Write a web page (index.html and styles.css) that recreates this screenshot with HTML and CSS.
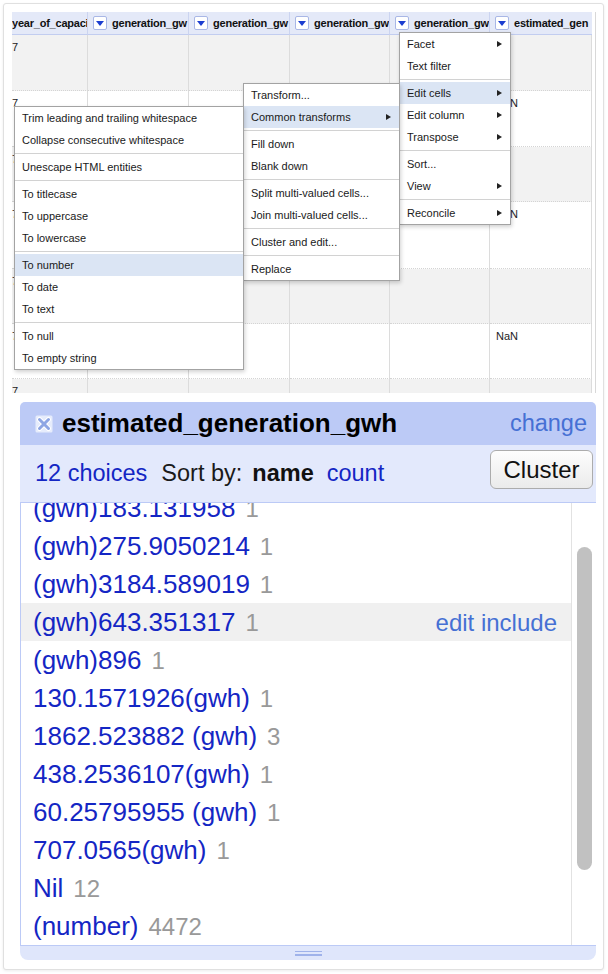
FILE: index.html
```html
<!DOCTYPE html>
<html>
<head>
<meta charset="utf-8">
<link rel="stylesheet" href="styles.css">
</head>
<body>
<div class="card">
  <div class="window">
    <div class="grid">
      <div class="row">
        <div class="hcell first"><span class="htext">year_of_capaci</span></div>
        <div class="hcell"><span class="dd"></span><span class="htext">generation_gw</span></div>
        <div class="hcell"><span class="dd"></span><span class="htext">generation_gw</span></div>
        <div class="hcell"><span class="dd"></span><span class="htext">generation_gw</span></div>
        <div class="hcell"><span class="dd"></span><span class="htext">generation_gw</span></div>
        <div class="hcell last"><span class="dd"></span><span class="htext">estimated_gen</span></div>
      </div>
      <div class="row alt"><div class="cell c1">7</div><div class="cell"></div><div class="cell"></div><div class="cell"></div><div class="cell"></div><div class="cell"></div></div>
      <div class="row"><div class="cell c1">7</div><div class="cell"></div><div class="cell"></div><div class="cell"></div><div class="cell"></div><div class="cell">NaN</div></div>
      <div class="row alt"><div class="cell c1">7</div><div class="cell"></div><div class="cell"></div><div class="cell"></div><div class="cell"></div><div class="cell"></div></div>
      <div class="row"><div class="cell c1">7</div><div class="cell"></div><div class="cell"></div><div class="cell"></div><div class="cell"></div><div class="cell">NaN</div></div>
      <div class="row alt"><div class="cell c1">7</div><div class="cell"></div><div class="cell"></div><div class="cell"></div><div class="cell"></div><div class="cell"></div></div>
      <div class="row"><div class="cell c1">7</div><div class="cell"></div><div class="cell"></div><div class="cell"></div><div class="cell"></div><div class="cell">NaN</div></div>
      <div class="row alt"><div class="cell c1">7</div><div class="cell"></div><div class="cell"></div><div class="cell"></div><div class="cell"></div><div class="cell"></div></div>
    </div>
    <div class="edge"></div>

    <div class="menu menu-a">
      <div class="mi">Facet<span class="arr"></span></div>
      <div class="mi">Text filter</div>
      <div class="sep"></div>
      <div class="mi on">Edit cells<span class="arr"></span></div>
      <div class="mi">Edit column<span class="arr"></span></div>
      <div class="mi">Transpose<span class="arr"></span></div>
      <div class="sep"></div>
      <div class="mi">Sort...</div>
      <div class="mi">View<span class="arr"></span></div>
      <div class="sep"></div>
      <div class="mi">Reconcile<span class="arr"></span></div>
    </div>

    <div class="menu menu-b">
      <div class="mi">Transform...</div>
      <div class="mi on">Common transforms<span class="arr"></span></div>
      <div class="sep"></div>
      <div class="mi">Fill down</div>
      <div class="mi">Blank down</div>
      <div class="sep"></div>
      <div class="mi">Split multi-valued cells...</div>
      <div class="mi">Join multi-valued cells...</div>
      <div class="sep"></div>
      <div class="mi">Cluster and edit...</div>
      <div class="sep"></div>
      <div class="mi">Replace</div>
    </div>

    <div class="menu menu-c">
      <div class="mi">Trim leading and trailing whitespace</div>
      <div class="mi">Collapse consecutive whitespace</div>
      <div class="sep"></div>
      <div class="mi">Unescape HTML entities</div>
      <div class="sep"></div>
      <div class="mi">To titlecase</div>
      <div class="mi">To uppercase</div>
      <div class="mi">To lowercase</div>
      <div class="sep"></div>
      <div class="mi on">To number</div>
      <div class="mi">To date</div>
      <div class="mi">To text</div>
      <div class="sep"></div>
      <div class="mi">To null</div>
      <div class="mi">To empty string</div>
    </div>
  </div>

  <div class="facet">
    <div class="ftitle">
      <svg class="fclose" width="18" height="18" viewBox="0 0 18 18">
        <rect x="0.5" y="0.5" width="17" height="17" rx="1.5" fill="#e6ecfc"/>
        <path d="M4.5 4.5 L13.5 13.5 M13.5 4.5 L4.5 13.5" stroke="#ffffff" stroke-width="5" stroke-linecap="round"/>
        <path d="M4.5 4.5 L13.5 13.5 M13.5 4.5 L4.5 13.5" stroke="#8ea6e4" stroke-width="3" stroke-linecap="round"/>
      </svg>
      <span class="fname">estimated_generation_gwh</span>
      <span class="flink">change</span>
    </div>
    <div class="fcontrols">
      <span class="blue">12 choices</span>
      <span class="sortby">Sort by:</span>
      <span class="sname">name</span>
      <span class="blue scount">count</span>
      <button class="cluster">Cluster</button>
    </div>
    <div class="fbody">
      <div class="flist">
        <div class="flist-inner">
          <div class="fitem"><span class="lbl">(gwh)183.131958</span><span class="cnt">1</span></div>
          <div class="fitem"><span class="lbl">(gwh)275.9050214</span><span class="cnt">1</span></div>
          <div class="fitem"><span class="lbl">(gwh)3184.589019</span><span class="cnt">1</span></div>
          <div class="fitem on"><span class="lbl">(gwh)643.351317</span><span class="cnt">1</span><span class="acts">edit include</span></div>
          <div class="fitem"><span class="lbl">(gwh)896</span><span class="cnt">1</span></div>
          <div class="fitem"><span class="lbl">130.1571926(gwh)</span><span class="cnt">1</span></div>
          <div class="fitem"><span class="lbl">1862.523882 (gwh)</span><span class="cnt">3</span></div>
          <div class="fitem"><span class="lbl">438.2536107(gwh)</span><span class="cnt">1</span></div>
          <div class="fitem"><span class="lbl">60.25795955 (gwh)</span><span class="cnt">1</span></div>
          <div class="fitem"><span class="lbl">707.0565(gwh)</span><span class="cnt">1</span></div>
          <div class="fitem"><span class="lbl">Nil</span><span class="cnt">12</span></div>
          <div class="fitem"><span class="lbl">(number)</span><span class="cnt">4472</span></div>
        </div>
      </div>
      <div class="ftrack"><div class="fthumb"></div></div>
    </div>
    <div class="fgrip"><span></span><span></span></div>
  </div>
</div>
</body>
</html>
```
FILE: styles.css
```css
* { box-sizing: border-box; }
body {
  margin: 0;
  padding: 3px;
  background: #fff;
  font-family: "Liberation Sans", Arial, sans-serif;
}
.card {
  width: 601px;
  height: 967px;
  border: 1px solid #e0e0e0;
  border-radius: 3px;
  box-shadow: 0 1px 3px rgba(0,0,0,0.08);
  padding: 8px 7px 9px 8px;
  background: #fff;
}
.window {
  position: relative;
  width: 584px;
  height: 381px;
  overflow: hidden;
  display: flex;
  background: #fff;
}
.grid {
  flex: none;
  width: 580px;
  display: grid;
  grid-template-columns: 76px 101px 101px 100px 100px 102px;
  grid-template-rows: 23px 56px 56px 55px 67px 55px 55px 56px;
}
.edge {
  flex: 1;
  border-right: 1px solid #d8d8d8;
}
.row { display: contents; }
.hcell {
  background: #e4e9f8;
  border-bottom: 1px solid #c2cdf0;
  border-right: 1px solid #cbd4f0;
  display: flex;
  align-items: center;
  gap: 5px;
  padding-left: 5px;
  overflow: hidden;
  white-space: nowrap;
  font-size: 11px;
  font-weight: bold;
  color: #111;
}
.hcell.first { padding-left: 0; }
.hcell.last { border-right: none; }
.htext { flex: none; letter-spacing: -0.22px; }
.dd {
  flex: none;
  width: 14px;
  height: 14px;
  border: 1px solid #a9b7e6;
  border-radius: 2px;
  background: #fff;
  display: flex;
  align-items: center;
  justify-content: center;
}
.dd::after {
  content: "";
  border-left: 4px solid transparent;
  border-right: 4px solid transparent;
  border-top: 5px solid #1c3ed0;
  margin-top: 1px;
}
.cell {
  border-right: 1px solid #dcdcdc;
  border-bottom: 1px dotted #d4d4d4;
  padding: 5px 6px;
  font-size: 11px;
  line-height: 14px;
  color: #222;
  overflow: hidden;
  white-space: nowrap;
}
.cell.c1 { padding-left: 0; }
.row.alt .cell { background: #f2f2f2; }

.menu {
  position: absolute;
  background: #fff;
  border: 1px solid #a3a3a3;
  box-shadow: 1px 2px 4px rgba(0,0,0,0.18);
  font-size: 11px;
  color: #1a1a1a;
}
.menu-a { left: 387px; top: 20px; width: 112px; z-index: 1; }
.menu-b { left: 231px; top: 71px; width: 157px; z-index: 2; }
.menu-c { left: 2px; top: 94px; width: 230px; z-index: 3; }
.mi {
  height: 22px;
  display: flex;
  align-items: center;
  padding: 0 8px 0 7px;
  white-space: nowrap;
}
.mi.on { background: #dbe5f4; }
.arr {
  margin-left: auto;
  width: 0;
  height: 0;
  border-left: 5px solid #222;
  border-top: 3.5px solid transparent;
  border-bottom: 3.5px solid transparent;
}
.sep {
  height: 1px;
  background: #d2d2d2;
  margin: 2px 0;
}

.facet {
  margin-top: 9px;
  margin-left: 8px;
  width: 576px;
  height: 558px;
  display: flex;
  flex-direction: column;
  border-radius: 5px 5px 8px 8px;
  overflow: hidden;
}
.ftitle {
  height: 43px;
  flex: none;
  background: #bccaf6;
  display: flex;
  align-items: center;
  padding: 0 9px 0 15px;
}
.fclose { flex: none; margin-right: 9px; }
.fname {
  font-weight: bold;
  font-size: 26px;
  color: #000;
}
.flink {
  margin-left: auto;
  color: #4670d4;
  font-size: 23.5px;
}
.fcontrols {
  height: 57px;
  flex: none;
  background: #e3e9fc;
  display: flex;
  align-items: center;
  padding: 0 3px 0 15px;
  font-size: 23.5px;
  color: #1a1a1a;
}
.blue { color: #1426c4; }
.sortby { margin-left: 14px; }
.sname { margin-left: 10px; font-weight: bold; color: #111; }
.scount { margin-left: 13px; }
.cluster {
  margin-left: auto;
  align-self: flex-start;
  margin-top: 5px;
  width: 103px;
  height: 39px;
  font-family: "Liberation Sans", Arial, sans-serif;
  font-size: 24px;
  color: #111;
  background: linear-gradient(#fdfdfd, #ebebeb);
  border: 1px solid #acacac;
  border-radius: 6px;
  padding: 0;
}
.fbody {
  height: 443px;
  flex: none;
  display: flex;
  border-top: 1px solid #bccaf6;
  border-left: 1px solid #bccaf6;
  background: #fff;
}
.flist {
  flex: 1;
  overflow: hidden;
}
.flist-inner { margin-top: -14px; }
.fitem {
  height: 38px;
  line-height: 38px;
  display: flex;
  align-items: baseline;
  padding: 0 14px 0 12px;
  white-space: nowrap;
}
.fitem.on { background: #f0f0f0; }
.lbl { color: #1426c4; font-size: 26px; }
.cnt { color: #999; font-size: 24px; margin-left: 10px; }
.acts { margin-left: auto; color: #4670d4; font-size: 24px; }
.ftrack {
  width: 25px;
  flex: none;
  border-left: 1px solid #e2e2e2;
  background: #fff;
}
.fthumb {
  margin: 44px 0 0 5px;
  width: 15px;
  height: 323px;
  border-radius: 8px;
  background: #c1c1c1;
}
.fgrip {
  height: 15px;
  flex: none;
  background: #dfe6fb;
  border-top: 1px solid #bccaf6;
  display: flex;
  flex-direction: column;
  align-items: center;
  justify-content: center;
  gap: 2px;
}
.fgrip span {
  width: 27px;
  height: 1.5px;
  background: #9fb2ea;
}
```
